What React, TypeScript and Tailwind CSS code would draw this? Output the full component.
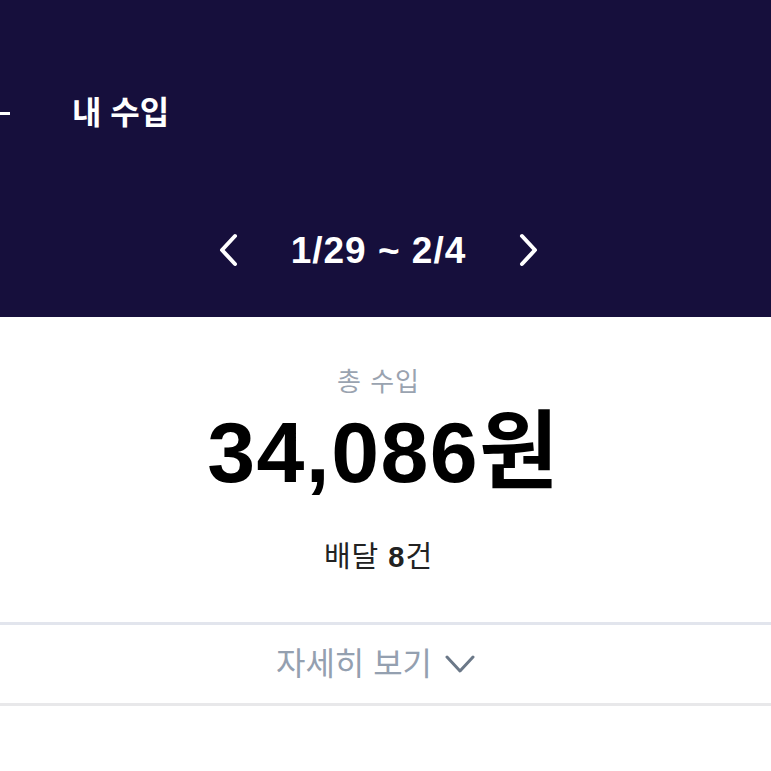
import React from "react";

const font = { fontFamily: '"Liberation Sans", "Noto Sans CJK KR", sans-serif' };

const ChevronLeft = () => (
  <svg width="22" height="34" viewBox="0 0 22 34" fill="none">
    <path d="M18 3 L5 17 L18 31" stroke="white" strokeWidth="4" strokeLinecap="round" strokeLinejoin="round" />
  </svg>
);

const ChevronRight = () => (
  <svg width="22" height="34" viewBox="0 0 22 34" fill="none">
    <path d="M4 3 L17 17 L4 31" stroke="white" strokeWidth="4" strokeLinecap="round" strokeLinejoin="round" />
  </svg>
);

const ChevronDown = () => (
  <svg width="30" height="20" viewBox="0 0 30 20" fill="none">
    <path d="M2 3 L15 17 L28 3" stroke="#6b7888" strokeWidth="3" strokeLinecap="round" strokeLinejoin="round" />
  </svg>
);

export default function App() {
  return (
    <div className="w-[771px] h-[771px] bg-white overflow-hidden" style={font}>
      <header className="h-[317px] bg-[#160f3c] flex flex-col">
        <div className="mt-[93px] h-[40px] flex items-center">
          <span className="w-[10px] h-[3px] bg-white" />
          <h1 className="ml-[62px] text-[32px] font-bold text-white leading-none">내 수입</h1>
        </div>
        <div className="mt-[97px] h-[40px] pr-[14px] flex items-center justify-center">
          <button className="w-[22px] flex items-center">
            <ChevronLeft />
          </button>
          <span className="mx-[52px] text-[37px] font-bold text-white leading-none tracking-[1px]">
            1/29 ~ 2/4
          </span>
          <button className="w-[22px] flex items-center">
            <ChevronRight />
          </button>
        </div>
      </header>

      <section className="flex flex-col items-center">
        <p className="mt-[52px] mr-[14px] text-[26px] text-[#9aa3b0] leading-none tracking-[1px]">총 수입</p>
        <p className="mt-[14px] mr-[4px] text-[86px] font-bold text-black leading-none tracking-[1.5px]">34,086원</p>
        <p className="mt-[48px] mr-[14px] text-[29px] text-[#222] leading-none tracking-[1px]">
          배달 <span className="font-bold">8</span>건
        </p>
      </section>

      <div className="mt-[50px] h-[3px] bg-[#e2e5ed]" />
      <button className="w-full h-[81px] pr-[20px] flex items-center justify-center gap-[13px] border-b-[3px] border-[#e8e8ea]">
        <span className="text-[32px] text-[#94a0b0] leading-none">자세히 보기</span>
        <ChevronDown />
      </button>
    </div>
  );
}
